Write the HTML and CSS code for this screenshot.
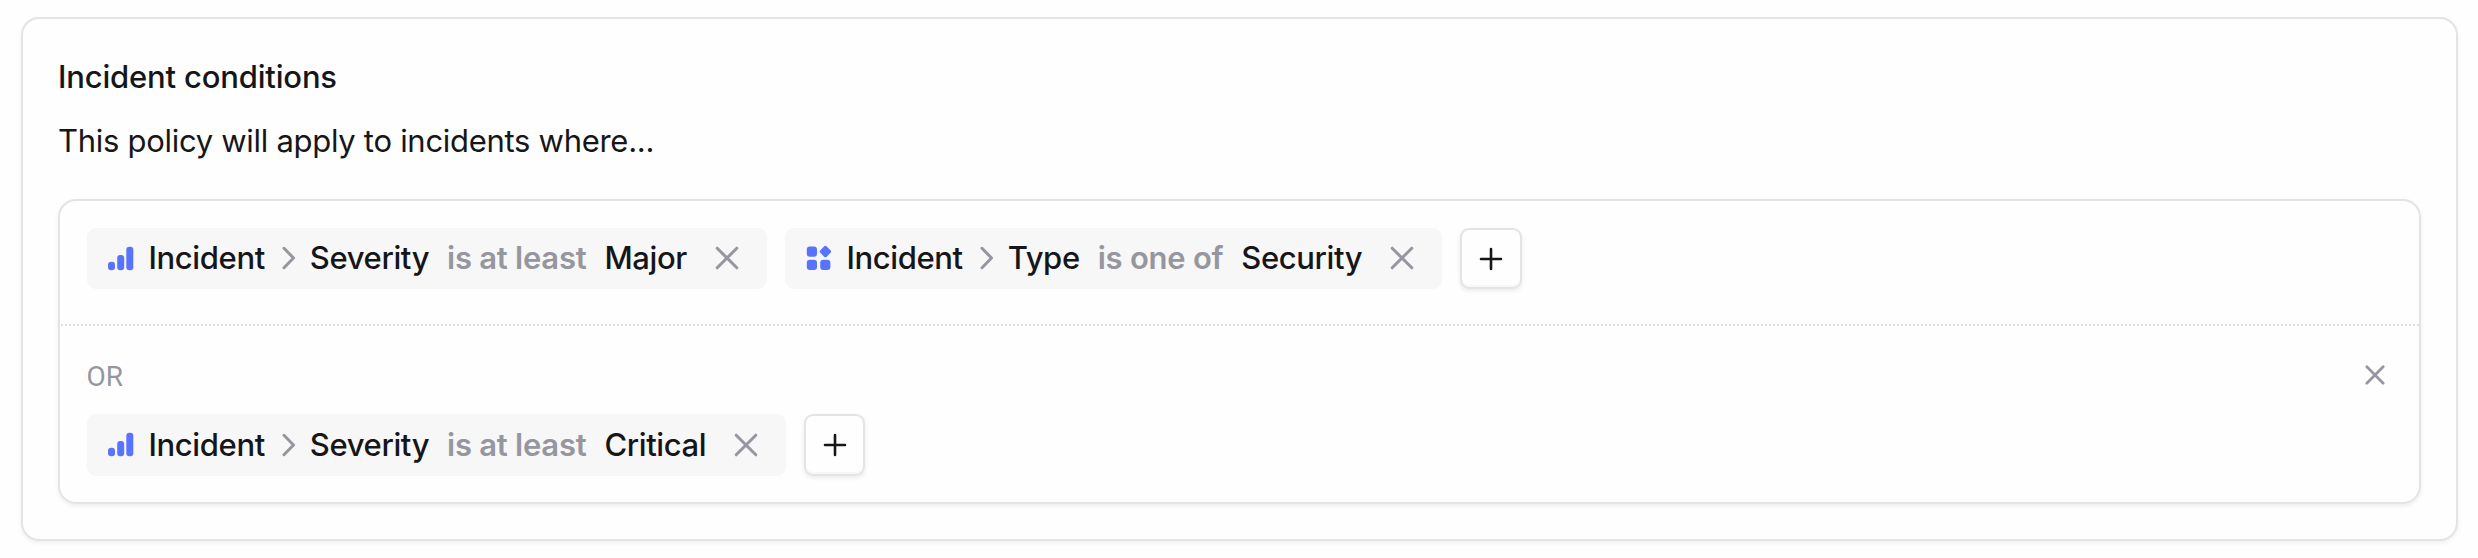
FILE: index.html
```html
<!DOCTYPE html>
<html lang="en">
<head>
  <meta charset="UTF-8" />
  <meta name="viewport" content="width=device-width, initial-scale=1.0" />
  <title>Incident conditions</title>
  <link rel="stylesheet" href="styles.css">
</head>
<body>
  <!-- Shared icons -->
  <svg class="sprite" width="0" height="0">
    <symbol id="icon-bars" viewBox="0 0 26 25">
      <rect x="0" y="15.8" width="7" height="8.4" rx="3.2" />
      <rect x="9.2" y="9" width="7" height="15.2" rx="3" />
      <rect x="18.3" y="0.7" width="7" height="23.5" rx="3" />
    </symbol>
    <symbol id="icon-grid" viewBox="0 0 26 26">
      <rect x="0.8" y="1.5" width="10.2" height="10.2" rx="3" />
      <rect x="0.8" y="14.8" width="10.2" height="10.2" rx="3" />
      <rect x="14.2" y="14.8" width="10.2" height="10.2" rx="3" />
      <rect x="14.9" y="2.1" width="9" height="9" rx="1.8" transform="rotate(45 19.4 6.6)" />
    </symbol>
    <symbol id="icon-chevron" viewBox="0 0 14 24">
      <path d="M2 2.3l9.5 9.7L2 21.7" />
    </symbol>
    <symbol id="icon-close" viewBox="0 0 24 24">
      <path d="M2.2 2.2l19.6 19.6M21.8 2.2L2.2 21.8" />
    </symbol>
    <symbol id="icon-plus" viewBox="0 0 24 24">
      <path d="M12 2v20M2 12h20" />
    </symbol>
  </svg>

  <section class="card">
    <h2>Incident conditions</h2>
    <p class="intro">This policy will apply to incidents where...</p>

    <div class="groups">
      <div class="group">
        <div class="conditions">
          <div class="chip">
            <svg class="icon-bars"><use href="#icon-bars" /></svg>
            <span>Incident</span>
            <svg class="icon-chevron"><use href="#icon-chevron" /></svg>
            <span>Severity</span>
            <span class="operator">is at least</span>
            <span>Major</span>
            <button type="button" class="remove-btn" aria-label="Remove condition"><svg><use href="#icon-close" /></svg></button>
          </div>
          <div class="chip">
            <svg class="icon-grid"><use href="#icon-grid" /></svg>
            <span>Incident</span>
            <svg class="icon-chevron"><use href="#icon-chevron" /></svg>
            <span>Type</span>
            <span class="operator">is one of</span>
            <span>Security</span>
            <button type="button" class="remove-btn" aria-label="Remove condition"><svg><use href="#icon-close" /></svg></button>
          </div>
          <button type="button" class="add-btn" aria-label="Add condition"><svg><use href="#icon-plus" /></svg></button>
        </div>
      </div>

      <div class="group">
        <div class="group-header">
          <span class="or-label">OR</span>
          <button type="button" class="remove-btn" aria-label="Remove group"><svg><use href="#icon-close" /></svg></button>
        </div>
        <div class="conditions">
          <div class="chip">
            <svg class="icon-bars"><use href="#icon-bars" /></svg>
            <span>Incident</span>
            <svg class="icon-chevron"><use href="#icon-chevron" /></svg>
            <span>Severity</span>
            <span class="operator">is at least</span>
            <span>Critical</span>
            <button type="button" class="remove-btn" aria-label="Remove condition"><svg><use href="#icon-close" /></svg></button>
          </div>
          <button type="button" class="add-btn" aria-label="Add condition"><svg><use href="#icon-plus" /></svg></button>
        </div>
      </div>
    </div>
  </section>
</body>
</html>
```
FILE: styles.css
```css
* {
  box-sizing: border-box;
}

body {
  font-family: Inter, sans-serif;
  font-size: 31px;
  background: #fefefe;
  margin: 0;
  padding: 17px 20px 17px 21px;
  color: #161618;
}

h2,
p {
  margin: 0;
}

button {
  padding: 0;
  border: none;
  background: none;
  cursor: pointer;
}

svg {
  display: block;
  flex: none;
}

.sprite {
  position: absolute;
}

.card {
  height: 524px;
  padding: 35px;
  border: 2px solid #e4e4e5;
  border-radius: 18px;
  box-shadow: 0 2px 4px rgba(0, 0, 0, 0.06);
}

h2 {
  font-size: 31px;
  font-weight: 500;
  line-height: 46px;
  letter-spacing: -0.18px;
}

.intro {
  margin-top: 18px;
  font-size: 31px;
  line-height: 46px;
  letter-spacing: -0.29px;
}

.groups {
  margin-top: 35px;
  border: 2px solid #e4e4e5;
  border-radius: 18px;
  box-shadow: 0 2px 4px rgba(0, 0, 0, 0.07);
}

.group {
  padding: 27px 27px 35px;
}

/* square dotted divider between groups */
.group + .group {
  padding: 29px 27px 26px;
  background: repeating-linear-gradient(90deg, transparent 0 1px, #e0e0e1 1px 3px, transparent 3px 4px) top / 100% 2px no-repeat;
}

.conditions {
  display: flex;
  gap: 18px;
  height: 61px;
}

.group + .group .conditions {
  height: 62px;
}

.chip {
  display: flex;
  align-items: center;
  padding: 0 28px 1px 21px;
  border-radius: 9px;
  background: #f7f7f7;
  font-weight: 500;
  line-height: 36px;
  letter-spacing: -0.38px;
}

.icon-bars,
.icon-grid {
  width: 26px;
  height: 25px;
  margin-right: 14.5px;
  fill: #5a73ff;
}

.icon-grid {
  height: 26px;
}

.icon-chevron {
  width: 14px;
  height: 24px;
  margin: 0 13.5px 0 17.5px;
}

.icon-chevron,
.remove-btn svg {
  fill: none;
  stroke: #9696a0;
  stroke-width: 3;
  stroke-linecap: round;
  stroke-linejoin: round;
}

.operator {
  margin: 0 18px;
  color: #96969f;
  font-weight: 600;
  letter-spacing: -0.25px;
}

.remove-btn svg {
  width: 24px;
  height: 24px;
}

.chip .remove-btn {
  margin-left: 28px;
}

.add-btn {
  display: grid;
  place-items: center;
  width: 62px;
  border: 2px solid #e4e4e5;
  border-radius: 9px;
  box-shadow: 0 2px 4px rgba(0, 0, 0, 0.08), inset 0 -2px 0 #f7f7f8;
}

.group + .group .add-btn {
  width: 61px;
}

.add-btn svg {
  width: 24px;
  height: 24px;
  fill: none;
  stroke: #161618;
  stroke-width: 2.6;
  stroke-linecap: round;
}

.group-header {
  display: flex;
  align-items: center;
  justify-content: space-between;
  height: 44px;
  margin-bottom: 17px;
}

.or-label {
  margin-left: -0.5px;
  padding-top: 3px;
  color: #96969f;
  font-family: Roboto, sans-serif;
  font-size: 28px;
}

.group-header .remove-btn {
  margin-right: 7px;
}

.group-header .remove-btn svg {
  width: 20px;
  height: 20px;
  margin-bottom: 1px;
  stroke-width: 3.3;
}
```
